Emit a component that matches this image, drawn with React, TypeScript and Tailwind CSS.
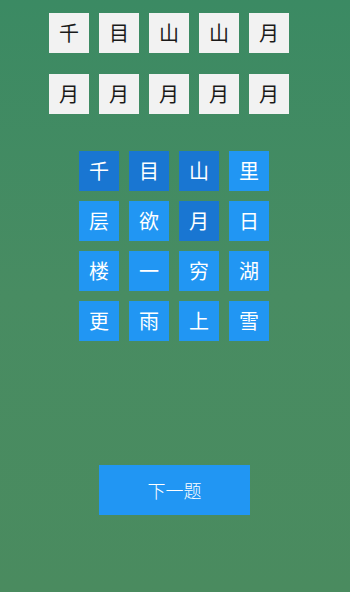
const topRows = [
  ['千', '目', '山', '山', '月'],
  ['月', '月', '月', '月', '月'],
]

const grid = [
  { ch: '千', picked: true },
  { ch: '目', picked: true },
  { ch: '山', picked: true },
  { ch: '里', picked: false },
  { ch: '层', picked: false },
  { ch: '欲', picked: false },
  { ch: '月', picked: true },
  { ch: '日', picked: false },
  { ch: '楼', picked: false },
  { ch: '一', picked: false },
  { ch: '穷', picked: false },
  { ch: '湖', picked: false },
  { ch: '更', picked: false },
  { ch: '雨', picked: false },
  { ch: '上', picked: false },
  { ch: '雪', picked: false },
]

export default function App() {
  return (
    <div
      className="w-[350px] h-[600px] bg-white"
      style={{ fontFamily: '"Noto Sans CJK SC", "Noto Sans", sans-serif' }}
    >
      <div className="flex h-[592px] flex-col bg-gradient-to-b from-[#3b8a63] via-[#488c62] to-[#4a8b5f]">
        <div className="flex flex-col gap-[21px] pl-[49px] pt-[13px]">
          {topRows.map((row, i) => (
            <div key={i} className="flex gap-[10px]">
              {row.map((ch, j) => (
                <div
                  key={j}
                  className="flex h-[40px] w-[40px] items-center justify-center bg-[#f2f2f2] text-[20px] leading-none text-[#1a1a1a]"
                >
                  {ch}
                </div>
              ))}
            </div>
          ))}
        </div>

        <div className="mt-[37px] ml-[79px] grid w-[190px] grid-cols-4 gap-[10px]">
          {grid.map((cell, i) => (
            <div
              key={i}
              className={`flex h-[40px] w-[40px] items-center justify-center text-[20px] leading-none text-white ${
                cell.picked ? 'bg-[#1976d2]' : 'bg-[#2196f3]'
              }`}
            >
              {cell.ch}
            </div>
          ))}
        </div>

        <button
          type="button"
          className="mt-[124px] ml-[99px] flex h-[50px] w-[151px] items-center justify-center bg-[#2196f3] text-[18px] font-light text-white"
        >
          下一题
        </button>
      </div>
    </div>
  )
}
